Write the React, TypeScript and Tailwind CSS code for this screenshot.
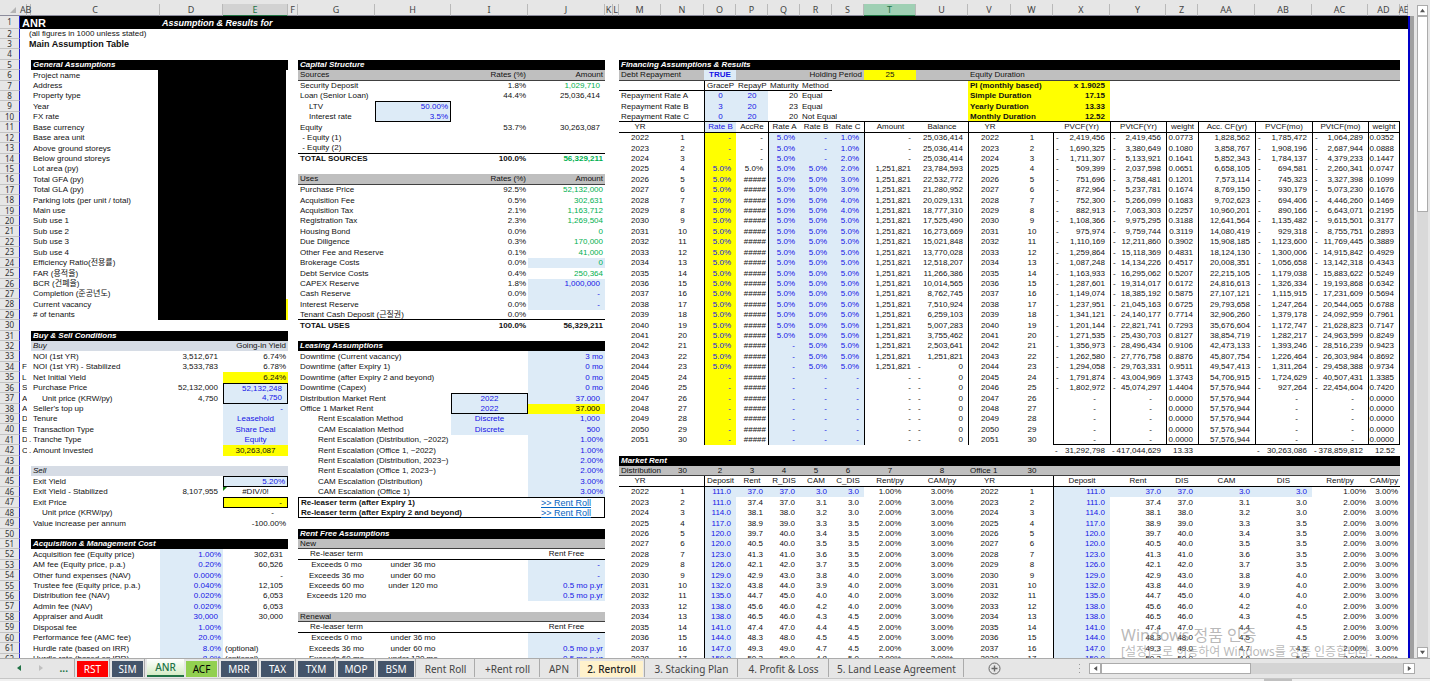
type Align = "left" | "indent" | "indent2" | "center" | "right" | "num" | "dash";

interface Cell {
  text?: string;
  align?: Align;
  bg?: string;
  ink?: string;
  font?: string;
  lines?: string;
  negative?: boolean;
  href?: string;
  flag?: boolean;
}

const COLUMNS: { id: string; width: string }[] = [
  { id: "A", width: "w-[7px]" },
  { id: "B", width: "w-[4px]" },
  { id: "C", width: "w-[129px]" },
  { id: "D", width: "w-[63px]" },
  { id: "E", width: "w-[65px]" },
  { id: "F", width: "w-[10px]" },
  { id: "G", width: "w-[77px]" },
  { id: "H", width: "w-[76px]" },
  { id: "I", width: "w-[77px]" },
  { id: "J", width: "w-[77px]" },
  { id: "K", width: "w-[8px]" },
  { id: "L", width: "w-[6px]" },
  { id: "M", width: "w-[42px]" },
  { id: "N", width: "w-[43px]" },
  { id: "O", width: "w-[32px]" },
  { id: "P", width: "w-[32px]" },
  { id: "Q", width: "w-[32px]" },
  { id: "R", width: "w-[32px]" },
  { id: "S", width: "w-[32px]" },
  { id: "T", width: "w-[52px]" },
  { id: "U", width: "w-[52px]" },
  { id: "V", width: "w-[43px]" },
  { id: "W", width: "w-[42px]" },
  { id: "X", width: "w-[57px]" },
  { id: "Y", width: "w-[56px]" },
  { id: "Z", width: "w-[32px]" },
  { id: "AA", width: "w-[57px]" },
  { id: "AB", width: "w-[57px]" },
  { id: "AC", width: "w-[56px]" },
  { id: "AD", width: "w-[32px]" },
  { id: "AE", width: "w-[8px]" },
];

const ROW_COUNT = 62;

const ALIGN: Record<Align, string> = {
  left: "justify-start pl-0.5",
  indent: "justify-start pl-[11px]",
  indent2: "justify-start pl-5",
  center: "justify-center",
  right: "justify-end pr-0.5",
  num: "justify-end pr-[5px]",
  dash: "justify-end pr-3.5",
};

const BLACK = "bg-black";
const GRAY = "bg-[#bfbfbf]";
const SLATE = "bg-[#d6dce5]";
const INPUT = "bg-[#ddebf7]";
const YELLOW = "bg-[#ffff00]";
const BLUE = "text-[#1414e6]";
const GREEN = "text-[#00b050]";

const sheet: Record<string, Cell> = {};

function colIndex(id: string) {
  return COLUMNS.findIndex((c) => c.id === id);
}

function patch(key: string, cell: Cell) {
  const prev = sheet[key] ?? {};
  const lines = [prev.lines, cell.lines].filter(Boolean).join(" ");
  sheet[key] = { ...prev, ...cell, lines };
}

function parse(range: string) {
  const [from, to = from] = range.split(":");
  const split = (ref: string) => {
    const m = /^([A-Z]+)(\d+)$/.exec(ref)!;
    return { col: colIndex(m[1]), row: Number(m[2]) };
  };
  return { a: split(from), b: split(to) };
}

function style(range: string, cell: Cell) {
  const { a, b } = parse(range);
  for (let r = a.row; r <= b.row; r++) {
    for (let c = a.col; c <= b.col; c++) patch(COLUMNS[c].id + r, cell);
  }
}

function box(range: string) {
  const { a, b } = parse(range);
  const id = (i: number) => COLUMNS[i].id;
  style(`${id(a.col)}${a.row}:${id(b.col)}${a.row}`, { lines: "border-t border-black" });
  style(`${id(a.col)}${b.row}:${id(b.col)}${b.row}`, { lines: "border-b border-black" });
  style(`${id(a.col)}${a.row}:${id(a.col)}${b.row}`, { lines: "border-l border-black" });
  style(`${id(b.col)}${a.row}:${id(b.col)}${b.row}`, { lines: "border-r border-black" });
}

// writes a list of values down one column, "" leaves a cell empty
function down(col: string, row: number, values: string[], align: Align, extra: Cell = {}) {
  values.forEach((text, i) => {
    if (text) patch(col + (row + i), { text, align, ...extra });
  });
}

// writes a list of values along one row
function across(col: string, row: number, values: string[], align: Align, extra: Cell = {}) {
  const start = colIndex(col);
  values.forEach((text, i) => {
    if (text) patch(COLUMNS[start + i].id + row, { text, align, ...extra });
  });
}

function heading(range: string, text: string) {
  style(range, { bg: BLACK });
  patch(range.split(":")[0], { text, align: "left", ink: "text-white", font: "font-bold italic" });
}

const list = (s: string) => s.trim().split(/\s+/);
const fill = (text: string, n: number) => Array<string>(n).fill(text);

// title rows
style("A1:AE1", { bg: BLACK, ink: "text-white" });
patch("A1", { text: "ANR", align: "left", font: "font-bold text-[11px]" });
patch("D1", { text: "Assumption & Results for", align: "left", font: "font-bold italic text-[9px]" });
patch("B2", { text: "(all figures in 1000 unless stated)", align: "left" });
patch("B3", { text: "Main Assumption Table", align: "left", font: "font-bold text-[9px]" });

// general assumptions
heading("C5:E5", "General Assumptions");
down("C", 6, [
  "Project name", "Address", "Property type", "Year", "FX rate", "Base currency", "Base area unit",
  "Above ground storeys", "Below ground storeys", "Lot area (py)", "Total GFA (py)", "Total GLA (py)",
  "Parking lots (per unit / total)", "Main use", "Sub use 1", "Sub use 2", "Sub use 3", "Sub use 4",
  "Efficiency Ratio(전용률)", "FAR (용적율)", "BCR (건폐율)", "Completion (준공년도)", "Current vacancy", "# of tenants",
], "left");
style("C6:C29", { lines: "border-r-2 border-black" });
style("D6:E29", { bg: BLACK });
style("E6:E27", { lines: "border-r-2 border-white" });
style("E28:E29", { lines: "border-r-2 border-[#ffff00]" });

// buy & sell
heading("C31:E31", "Buy & Sell Conditions");
style("C32:E32", { bg: SLATE });
patch("C32", { text: "Buy", align: "left", font: "italic" });
patch("E32", { text: "Going-in Yield", align: "right" });
down("A", 34, list("F L S A A D E D C"), "left");
down("B", 41, [".", "."], "left");
down("C", 33, [
  "NOI (1st YR)", "NOI (1st YR) - Stabilized", "Net Initial Yield", "Purchase Price", "",
  "Seller's top up", "Tenure", "Transaction Type", "Tranche Type", "Amount Invested",
], "left");
patch("C37", { text: "Unit price (KRW/py)", align: "indent" });
down("D", 33, ["3,512,671", "3,533,783", "", "52,132,000", "4,750"], "num");
down("E", 33, ["6.74%", "6.78%", "6.24%"], "right");
down("E", 36, ["52,132,248", "4,750", "-"], "num", { ink: BLUE });
down("E", 39, ["Leasehold", "Share Deal", "Equity"], "center", { ink: BLUE });
patch("E42", { text: "30,263,087", align: "center" });
style("E36:E41", { bg: INPUT });
style("E35", { bg: YELLOW });
style("E42", { bg: YELLOW });
box("E36:E37");

style("C44:E44", { bg: SLATE });
patch("C44", { text: "Sell", align: "left", font: "italic" });
down("C", 45, ["Exit Yield", "Exit Yield - Stabilized", "Exit Price", "", "Value increase per annum"], "left");
patch("C48", { text: "Unit price (KRW/py)", align: "indent" });
patch("D46", { text: "8,107,955", align: "num" });
patch("E45", { text: "5.20%", align: "right", ink: BLUE, bg: INPUT });
patch("E46", { text: "#DIV/0!", align: "center", flag: true });
patch("E47", { text: "-", align: "num", bg: YELLOW });
patch("E48", { text: "-", align: "dash" });
patch("E49", { text: "-100.00%", align: "right" });
box("E45");
box("E47");

// acquisition & management
heading("C51:E51", "Acquisition & Management Cost");
down("C", 52, [
  "Acquisition fee (Equity price)", "AM fee (Equity price, p.a.)", "Other fund expenses (NAV)",
  "Trustee fee (Equity price, p.a.)", "Distribution fee (NAV)", "Admin fee (NAV)", "Appraiser and Audit",
  "Disposal fee", "Performance fee (AMC fee)", "Hurdle rate (based on IRR)", "Hurdle rate (based on IRR)",
], "left");
down("D", 52, list("1.00% 0.20% 0.000% 0.040% 0.020% 0.020% 30,000 1.00% 20.0% 8.0% 8.0%"), "right");
patch("D58", { align: "num" });
style("D52:D62", { bg: INPUT, ink: BLUE });
down("E", 52, list("302,631 60,526 - 12,105 6,053 6,053 30,000"), "num");
down("E", 61, ["(optional)", "(optional)"], "left");

// capital structure
heading("G5:J5", "Capital Structure");
for (const [row, title] of [[6, "Sources"], [16, "Uses"]] as const) {
  style(`G${row}:J${row}`, { bg: GRAY, lines: "border-b border-[#404040]" });
  across("G", row, [title], "left");
  across("I", row, ["Rates (%)", "Amount"], "right");
}
down("G", 7, ["Security Deposit", "Loan (Senior Loan)"], "left");
down("G", 9, ["LTV", "Interest rate"], "indent");
down("G", 11, ["Equity", "\u00a0- Equity (1)", "\u00a0- Equity (2)"], "left");
down("H", 9, ["50.00%", "3.5%"], "right", { ink: BLUE, bg: INPUT });
box("H9:H10");
down("I", 7, ["1.8%", "44.4%", "", "", "53.7%"], "right");
down("J", 7, ["1,029,710", "25,036,414", "", "", "30,263,087"], "num");
patch("J7", { ink: GREEN });
style("G13:J13", { lines: "border-b border-black" });
patch("G14", { text: "TOTAL SOURCES", align: "left", font: "font-bold" });
across("I", 14, ["100.0%", "56,329,211"], "right", { font: "font-bold" });
patch("J14", { ink: GREEN });

down("G", 17, [
  "Purchase Price", "Acquisition Fee", "Acquisition Tax", "Registration Tax", "Housing Bond", "Due Diligence",
  "Other Fee and Reserve", "Brokerage Costs", "Debt Service Costs", "CAPEX Reserve", "Cash Reserve",
  "Interest Reserve", "Tenant Cash Deposit (근질권)",
], "left");
down("I", 17, list("92.5% 0.5% 2.1% 2.3% 0.0% 0.3% 0.1% 0.0% 0.4% 1.8% 0.0% 0.0% 0.0%"), "right");
down("J", 17, list("52,132,000 302,631 1,163,712 1,269,504 0 170,000 41,000 0 250,364"), "right", { ink: GREEN });
down("J", 26, ["1,000,000", "-", "-"], "num", { ink: BLUE, bg: INPUT });
style("J24", { bg: INPUT });
style("G29:J29", { lines: "border-b border-black" });
patch("G30", { text: "TOTAL USES", align: "left", font: "font-bold" });
across("I", 30, ["100.0%", "56,329,211"], "right", { font: "font-bold" });

// leasing
heading("G32:J32", "Leasing Assumptions");
down("G", 33, [
  "Downtime (Current vacancy)", "Downtime (after Expiry 1)", "Downtime (after Expiry 2 and beyond)",
  "Downtime (Capex)", "Distribution Market Rent", "Office 1 Market Rent",
], "left");
down("G", 39, [
  "Rent Escalation Method", "CAM Escalation Method", "Rent Escalation (Distribution, ~2022)",
  "Rent Escalation (Office 1, ~2022)", "Rent Escalation (Distribution, 2023~)",
  "Rent Escalation (Office 1, 2023~)", "CAM Escalation (Distribution)", "CAM Escalation (Office 1)",
], "indent2");
down("I", 37, ["2022", "2022", "Discrete", "Discrete"], "center", { ink: BLUE, bg: INPUT });
box("I37:I38");
style("J33:J46", { bg: INPUT, ink: BLUE });
down("J", 33, ["3 mo", "0 mo", "0 mo", "0 mo"], "right");
down("J", 37, ["37.000", "37.000", "1,000", "500"], "num");
down("J", 41, list("1.00% 1.00% 2.00% 2.00% 3.00% 3.00%"), "right");
patch("J38", { bg: YELLOW, ink: "text-black" });
down("G", 47, ["Re-leaser term (after Expiry 1)", "Re-leaser term (after Expiry 2 and beyond)"], "left", { font: "font-bold" });
down("J", 47, [">> Rent Roll", ">> Rent Roll"], "center", { href: "#rent-roll" });
box("G47:J48");

// rent free
heading("G50:J50", "Rent Free Assumptions");
for (const [row, title] of [[51, "New"], [58, "Renewal"]] as const) {
  style(`G${row}:J${row}`, { bg: GRAY, lines: "border-b border-[#404040]" });
  patch("G" + row, { text: title, align: "left" });
  style(`G${row + 1}:J${row + 1}`, { lines: "border-b border-black" });
  patch("G" + (row + 1), { text: "Re-leaser term", align: "center" });
  patch("J" + (row + 1), { text: "Rent Free", align: "center" });
}
down("G", 53, ["Exceeds 0 mo", "Exceeds 36 mo", "Exceeds 60 mo", "Exceeds 120 mo"], "center");
down("H", 53, ["under 36 mo", "under 60 mo", "under 120 mo"], "center");
down("J", 53, ["-", "-"], "num");
down("J", 55, ["0.5 mo p.yr", "0.5 mo p.yr"], "right");
down("G", 60, ["Exceeds 0 mo", "Exceeds 36 mo", "Exceeds 60 mo"], "center");
down("H", 60, ["under 36 mo", "under 60 mo", "under 120 mo"], "center");
down("J", 60, ["-"], "num");
down("J", 61, ["0.5 mo p.yr", "0.5 mo p.yr"], "right");
style("J53:J56", { bg: INPUT, ink: BLUE });
style("J60:J62", { bg: INPUT, ink: BLUE });

// financing
heading("M5:AD5", "Financing Assumptions & Results");
style("M6:AD6", { bg: GRAY, lines: "border-b border-[#404040]" });
patch("M6", { text: "Debt Repayment", align: "left" });
patch("O6", { text: "TRUE", align: "center", bg: INPUT, ink: BLUE, font: "font-bold" });
patch("S6", { text: "Holding Period", align: "right" });
patch("T6", { text: "25", align: "center", bg: YELLOW });
patch("V6", { text: "Equity Duration", align: "left" });
across("O", 7, ["GraceP", "RepayP", "Maturity", "Method"], "left");
style("M7:R7", { lines: "border-b border-black" });
down("M", 8, ["Repayment Rate A", "Repayment Rate B", "Repayment Rate C"], "left");
down("O", 8, ["0", "3", "0"], "center", { ink: BLUE, bg: INPUT });
down("P", 8, ["20", "20", "20"], "center", { ink: BLUE, bg: INPUT });
down("Q", 8, ["20", "23", "20"], "right");
down("R", 8, ["Equal", "Equal", "Not Equal"], "left");
down("V", 7, ["PI (monthly based)", "Simple Duration", "Yearly Duration", "Monthly Duration"], "left", { font: "font-bold" });
down("X", 7, ["x 1.9025", "17.15", "13.33", "12.52"], "num", { font: "font-bold" });
style("V7:X10", { bg: YELLOW });
style("M10:AD10", { lines: "border-b border-black" });
style("M11:AD11", { lines: "border-b border-black" });
across("M", 11, [
  "YR", "", "Rate B", "AccRe", "Rate A", "Rate B", "Rate C", "Amount", "Balance", "YR", "",
  "PVCF(Yr)", "PVtCF(Yr)", "weight", "Acc. CF(yr)", "PVCF(mo)", "PVtCF(mo)", "weight",
], "center");
patch("O11", { ink: BLUE, bg: INPUT });

const years = Array.from({ length: 30 }, (_, i) => String(2022 + i));
const counts = Array.from({ length: 30 }, (_, i) => String(i + 1));
for (const [yearCol, countCol] of [["M", "N"], ["V", "W"]]) {
  down(yearCol, 12, years, "center");
  down(countCol, 12, counts, "center");
  down(yearCol, 46, years.slice(0, 17), "center");
  down(countCol, 46, counts.slice(0, 17), "center");
}

const rateB = [...fill("-", 3), ...fill("5.0%", 20), ...fill("-", 7)];
down("O", 12, rateB, "num", { bg: YELLOW, ink: BLUE });
down("P", 12, ["-", "-", "-", "5.0%"], "num");
down("P", 16, fill("#####", 26), "right");
down("Q", 12, [...fill("5.0%", 20), ...fill("-", 10)], "num");
down("R", 12, rateB, "num");
down("S", 12, [...list("1.0% 1.0% 2.0% 2.0% 3.0% 3.0% 4.0% 4.0%"), ...fill("5.0%", 15), ...fill("-", 7)], "num");
style("Q12:S41", { bg: INPUT, ink: BLUE });
down("T", 12, [...fill("-", 3), ...fill("1,251,821", 20), ...fill("-", 7)], "num");
down("U", 12, list(`25,036,414 25,036,414 25,036,414 23,784,593 22,532,772 21,280,952 20,029,131 18,777,310
  17,525,490 16,273,669 15,021,848 13,770,028 12,518,207 11,266,386 10,014,565 8,762,745 7,510,924 6,259,103
  5,007,283 3,755,462 2,503,641 1,251,821`), "num");
down("U", 34, fill("0", 8), "num", { negative: true });

const pvcfYr = list(`2,419,456 1,690,325 1,711,307 509,399 751,696 872,964 752,300 882,913 1,108,366 975,974
  1,110,169 1,259,864 1,087,248 1,163,933 1,287,601 1,149,074 1,237,951 1,341,121 1,201,144 1,271,535
  1,356,973 1,262,580 1,294,058 1,791,874 1,802,972`);
const pvtcfYr = list(`2,419,456 3,380,649 5,133,921 2,037,598 3,758,481 5,237,781 5,266,099 7,063,303 9,975,295
  9,759,744 12,211,860 15,118,369 14,134,226 16,295,062 19,314,017 18,385,192 21,045,163 24,140,177 22,821,741
  25,430,703 28,496,434 27,776,758 29,763,331 43,004,969 45,074,297`);
const pvcfMo = list(`1,785,472 1,908,196 1,784,137 694,581 745,323 930,179 694,406 890,166 1,135,482 929,318
  1,123,600 1,300,006 1,056,658 1,179,038 1,326,334 1,115,915 1,247,264 1,379,178 1,172,747 1,282,217
  1,393,246 1,226,464 1,311,264 1,724,629 927,264`);
const pvtcfMo = list(`1,064,289 2,687,944 4,379,233 2,260,341 3,327,398 5,073,230 4,446,260 6,643,071 9,615,501
  8,755,751 11,769,445 14,915,842 13,142,318 15,883,622 19,193,868 17,231,609 20,544,065 24,092,959 21,628,823
  24,963,599 28,516,239 26,303,984 29,458,388 40,507,431 22,454,604`);
for (const [col, values, total] of [
  ["X", pvcfYr, "31,292,798"],
  ["Y", pvtcfYr, "417,044,629"],
  ["AB", pvcfMo, "30,263,086"],
  ["AC", pvtcfMo, "378,859,812"],
] as const) {
  down(col, 12, values as string[], "num", { negative: true });
  down(col, 37, fill("-", 5), "dash");
  patch(col + 42, { text: total, align: "num", negative: true });
}
down("Z", 12, list(`0.0773 0.1080 0.1641 0.0651 0.1201 0.1674 0.1683 0.2257 0.3188 0.3119 0.3902 0.4831 0.4517
  0.5207 0.6172 0.5875 0.6725 0.7714 0.7293 0.8127 0.9106 0.8876 0.9511 1.3743 1.4404 0.0000 0.0000 0.0000
  0.0000 0.0000 13.33`), "num");
down("AA", 12, [...list(`1,828,562 3,858,767 5,852,343 6,658,105 7,573,114 8,769,150 9,702,623 10,960,201
  12,641,564 14,080,419 15,908,185 18,124,130 20,008,351 22,215,105 24,816,613 27,107,121 29,793,658 32,906,260
  35,676,604 38,854,719 42,473,133 45,807,754 49,547,413 54,706,915`), ...fill("57,576,944", 6)], "num");
down("AD", 12, list(`0.0352 0.0888 0.1447 0.0747 0.1099 0.1676 0.1469 0.2195 0.3177 0.2893 0.3889 0.4929 0.4343
  0.5249 0.6342 0.5694 0.6788 0.7961 0.7147 0.8249 0.9423 0.8692 0.9734 1.3385 0.7420 0.0000 0.0000 0.0000
  0.0000 0.0000 12.52`), "num");

style("O7:O41", { lines: "border-l border-black" });
for (const col of ["Q", "T", "V", "Y", "Z", "AA", "AB", "AC", "AD"]) {
  style(`${col}11:${col}41`, { lines: "border-l border-black" });
}
style("X12:X41", { lines: "border-l border-black" });
style("AD11:AD41", { lines: "border-r border-black" });
style("X41:AD41", { lines: "border-b border-black" });

// market rent
heading("M43:AD43", "Market Rent");
style("M44:AD44", { bg: GRAY, lines: "border-b border-[#404040]" });
across("M", 44, ["Distribution", "30", "2", "3", "4", "5", "6", "7", "8", "", "30"], "center");
patch("M44", { align: "left" });
patch("V44", { text: "Office 1", align: "left" });
across("M", 45, [
  "YR", "", "Deposit", "Rent", "R_DIS", "CAM", "C_DIS", "Rent/py", "CAM/py", "YR", "",
  "Deposit", "Rent", "DIS", "CAM", "DIS", "Rent/py", "CAM/py",
], "center");
style("M45:AD45", { lines: "border-b border-black" });

const marketRent = [
  "111.0 37.0 37.0 3.0 3.0",
  "111.0 37.4 37.0 3.1 3.0",
  "114.0 38.1 38.0 3.2 3.0",
  "117.0 38.9 39.0 3.3 3.5",
  "120.0 39.7 40.0 3.4 3.5",
  "120.0 40.5 40.0 3.5 3.5",
  "123.0 41.3 41.0 3.6 3.5",
  "126.0 42.1 42.0 3.7 3.5",
  "129.0 42.9 43.0 3.8 4.0",
  "132.0 43.8 44.0 3.9 4.0",
  "135.0 44.7 45.0 4.0 4.0",
  "138.0 45.6 46.0 4.2 4.0",
  "138.0 46.5 46.0 4.3 4.5",
  "141.0 47.4 47.0 4.4 4.5",
  "144.0 48.3 48.0 4.5 4.5",
  "147.0 49.3 49.0 4.7 4.5",
  "150.0 50.3 50.0 4.8 5.0",
];
marketRent.forEach((line, i) => {
  const row = 46 + i;
  const growth = [i === 0 ? "1.00%" : "2.00%", "3.00%"];
  across("O", row, list(line), "num");
  across("T", row, growth, "center");
  across("X", row, list(line), "num");
  across("AC", row, growth, "right");
});
for (const range of ["O46:O62", "O46:S46", "X46:X62", "X46:AB46"]) {
  style(range, { bg: INPUT, ink: BLUE });
}
style("O45:O62", { lines: "border-l border-black" });
style("X45:X62", { lines: "border-l border-black" });

const TABS: { name: string; width: string; look: string }[] = [
  { name: "RST", width: "w-[31px]", look: "bg-[#ff0000] text-white" },
  { name: "SIM", width: "w-[31px]", look: "bg-[#44546a] text-white" },
  { name: "ANR", width: "w-[37px]", look: "active" },
  { name: "ACF", width: "w-[31px]", look: "bg-[#92d050] text-black" },
  { name: "MRR", width: "w-[36px]", look: "bg-[#44546a] text-white" },
  { name: "TAX", width: "w-[33px]", look: "bg-[#44546a] text-white" },
  { name: "TXM", width: "w-[36px]", look: "bg-[#44546a] text-white" },
  { name: "MOP", width: "w-[36px]", look: "bg-[#44546a] text-white" },
  { name: "BSM", width: "w-[36px]", look: "bg-[#44546a] text-white" },
  { name: "Rent Roll", width: "w-[55px]", look: "plain" },
  { name: "+Rent roll", width: "w-[61px]", look: "plain" },
  { name: "APN", width: "w-[34px]", look: "plain" },
  { name: "2. Rentroll", width: "w-[63px]", look: "bg-[#fff2cc] text-[#222] font-medium" },
  { name: "3. Stacking Plan", width: "w-[89px]", look: "plain" },
  { name: "4. Profit & Loss", width: "w-[87px]", look: "plain" },
  { name: "5. Land Lease Agreement", width: "w-[131px]", look: "plain" },
];

function rowHeight(row: number) {
  if (row === 1) return "h-[13px]";
  return ((row - 2) * 5) % 12 >= 7 ? "h-[11px]" : "h-[10px]";
}

function SheetCell({ cell, clip }: { cell?: Cell; clip: boolean }) {
  if (!cell) return <td />;
  const { text, align = "left", bg = "", ink = "", font = "", lines = "", negative, href, flag } = cell;
  return (
    <td className={`p-0 align-middle ${flag ? "relative" : ""} ${bg} ${ink} ${lines}`}>
      {flag && (
        <svg className="absolute left-0 top-0 w-1 h-1" viewBox="0 0 4 4">
          <path d="M0 0h4L0 4z" fill="#107c10" />
        </svg>
      )}
      {text && (
        <div className={`flex ${clip ? "overflow-hidden" : ""} ${ALIGN[align]} ${font}`}>
          {negative && <span className="mr-auto pl-0.5">-</span>}
          {href ? (
            <a href={href} className="text-[9px] text-[#0563c1] underline">{text}</a>
          ) : (
            <span>{text}</span>
          )}
        </div>
      )}
    </td>
  );
}

function headLook(id: string) {
  if (id === "T") return "bg-[#9fd0b4] text-[#217346] border-b-[#217346]";
  if (id === "E") return "bg-[#d2d2d2] text-[#217346] border-b-[#217346]";
  return "border-b-[#8c8c9c]";
}

function Grid() {
  return (
    <table className="w-full table-fixed border-separate border-spacing-0 bg-white text-[8px] leading-[8px] text-[#111] whitespace-nowrap cursor-cell">
      <colgroup>
        <col className="w-[20px]" />
        {COLUMNS.map((c) => <col key={c.id} className={c.width} />)}
      </colgroup>
      <thead className="bg-[#e6e6e6] font-['Noto_Sans',sans-serif] text-[#444]">
        <tr className="h-3">
          <th className="p-0 border-b border-[#8c8c9c]">
            <svg className="ml-auto mr-1 w-1.5 h-1.5" viewBox="0 0 6 6">
              <path d="M6 0v6H0z" fill="#b4b4b4" />
            </svg>
          </th>
          {COLUMNS.map((c) => (
            <th key={c.id} className={`p-0 border-b border-r border-r-[#b9b9b9] font-normal ${headLook(c.id)}`}>
              <div className={`flex justify-center ${c.id === "AE" ? "" : "text-[9px]"}`}>{c.id}</div>
            </th>
          ))}
        </tr>
      </thead>
      <tbody>
        {Array.from({ length: ROW_COUNT }, (_, i) => i + 1).map((row) => (
          <tr key={row} className={rowHeight(row)}>
            <th className="p-0 bg-[#e6e6e6] border-b border-b-[#c3c3c3] border-r border-r-[#2222cc] font-['Noto_Sans',sans-serif] font-normal text-[#333]">
              {row}
            </th>
            {COLUMNS.map((c) => (
              <SheetCell key={c.id} cell={sheet[c.id + row]} clip={c.id === "A" && row > 1} />
            ))}
          </tr>
        ))}
      </tbody>
    </table>
  );
}

function Arrow({ d }: { d: string }) {
  return (
    <svg className="w-[5px] h-[5px]" viewBox="0 0 6 6">
      <path d={d} fill="#555" />
    </svg>
  );
}

const SCROLL_BUTTON = "flex shrink-0 items-center justify-center border border-[#ababab] bg-white";

function VerticalScroll() {
  return (
    <div className="flex w-[11px] shrink-0 flex-col bg-[#d9d9d9] mt-[5px] mr-0.5">
      <button aria-label="Scroll up" className={`${SCROLL_BUTTON} h-[11px]`}><Arrow d="M3 1l3 4H0z" /></button>
      <div className="h-[30%] border border-[#ababab] bg-white" />
      <button aria-label="Scroll down" className={`${SCROLL_BUTTON} mt-auto h-[11px]`}><Arrow d="M0 1h6L3 5z" /></button>
    </div>
  );
}

function HorizontalScroll() {
  return (
    <div className="flex h-[11px] w-[326px] bg-[#d4d4d4]">
      <button aria-label="Scroll left" className={`${SCROLL_BUTTON} w-3`}><Arrow d="M5 0v6L1 3z" /></button>
      <div className="w-[46%] border border-[#ababab] bg-white" />
      <button aria-label="Scroll right" className={`${SCROLL_BUTTON} ml-auto w-3`}><Arrow d="M1 0l4 3-4 3z" /></button>
    </div>
  );
}

function SheetTab({ name, width, look }: { name: string; width: string; look: string }) {
  if (look === "active") {
    return (
      <button className={`${width} h-[18px] border-b-2 border-[#217346] bg-linear-to-b from-white to-[#d5ecc6] font-medium text-[#217346]`}>
        {name}
      </button>
    );
  }
  const plain = look === "plain";
  return (
    <div className="flex border-r border-[#ababab] pr-px">
      <button className={`${width} h-[18px] border-t-2 border-[#e6e6e6] ${plain ? "text-[#444]" : look}`}>
        {name}
      </button>
    </div>
  );
}

function TabBar() {
  return (
    <div className="flex h-5 shrink-0 items-start border-t border-[#ababab] bg-[#e6e6e6] font-['Noto_Sans',sans-serif] text-[10px] leading-[14px] whitespace-nowrap">
      <div className="flex h-[18px] w-[75px] shrink-0 items-center justify-end gap-4 border-r border-[#ababab] pr-1.5">
        <button aria-label="Previous sheet"><svg className="w-1.5 h-1.5" viewBox="0 0 6 6"><path d="M5 0v6L1 3z" fill="#217346" /></svg></button>
        <button aria-label="Next sheet"><svg className="w-1.5 h-1.5" viewBox="0 0 6 6"><path d="M1 0l4 3-4 3z" fill="#c0c0c0" /></svg></button>
        <button aria-label="More sheets" className="font-bold text-[#217346]">...</button>
      </div>
      <nav aria-label="Sheets" className="flex gap-0.5 pl-0.5">
        {TABS.map((tab) => <SheetTab key={tab.name} {...tab} />)}
      </nav>
      <button aria-label="New sheet" className="ml-6 mt-[3px]">
        <svg className="w-[13px] h-[13px]" viewBox="0 0 13 13" fill="none" stroke="#666">
          <circle cx="6.5" cy="6.5" r="5.5" />
          <path d="M6.5 3.5v6M3.5 6.5h6" strokeWidth="1.4" />
        </svg>
      </button>
      <div className="ml-auto mt-1 flex items-center gap-2 pr-[15px]">
        <svg className="w-[3px] h-[9px]" viewBox="0 0 3 9" fill="#999">
          <path d="M1 0h1v1H1zM1 4h1v1H1zM1 8h1v1H1z" />
        </svg>
        <HorizontalScroll />
      </div>
    </div>
  );
}

export default function App() {
  return (
    <div className="relative flex h-screen flex-col overflow-hidden bg-[#e6e6e6] font-['Liberation_Sans','Noto_Sans_CJK_KR',sans-serif]">
      <main className="flex min-h-0 flex-1">
        <div className="min-w-0 flex-1 overflow-hidden pt-1">
          <Grid />
        </div>
        <div className="mt-4 w-0.5 shrink-0 bg-[#0000c8]" />
        <div className="mt-4 mr-[3px] w-1 shrink-0 bg-[#a0a0a0]" />
        <VerticalScroll />
      </main>
      <TabBar />
      <footer className="flex h-[3px] shrink-0 border-t border-[#c6c6c6] bg-[#f0f0f0]">
        <div className="ml-auto mr-[138px] w-7 bg-[#c0c0c0]" />
      </footer>
      <div className="pointer-events-none absolute right-[60px] bottom-[22px] w-[249px] whitespace-nowrap font-['Noto_Sans','Noto_Sans_CJK_KR',sans-serif] text-[#8a8a8a]/60">
        <p className="text-[16px] leading-[18px]">Windows 정품 인증</p>
        <p className="text-[12px] leading-[15px]">[설정]으로 이동하여 Windows를 정품 인증합니다.</p>
      </div>
    </div>
  );
}
